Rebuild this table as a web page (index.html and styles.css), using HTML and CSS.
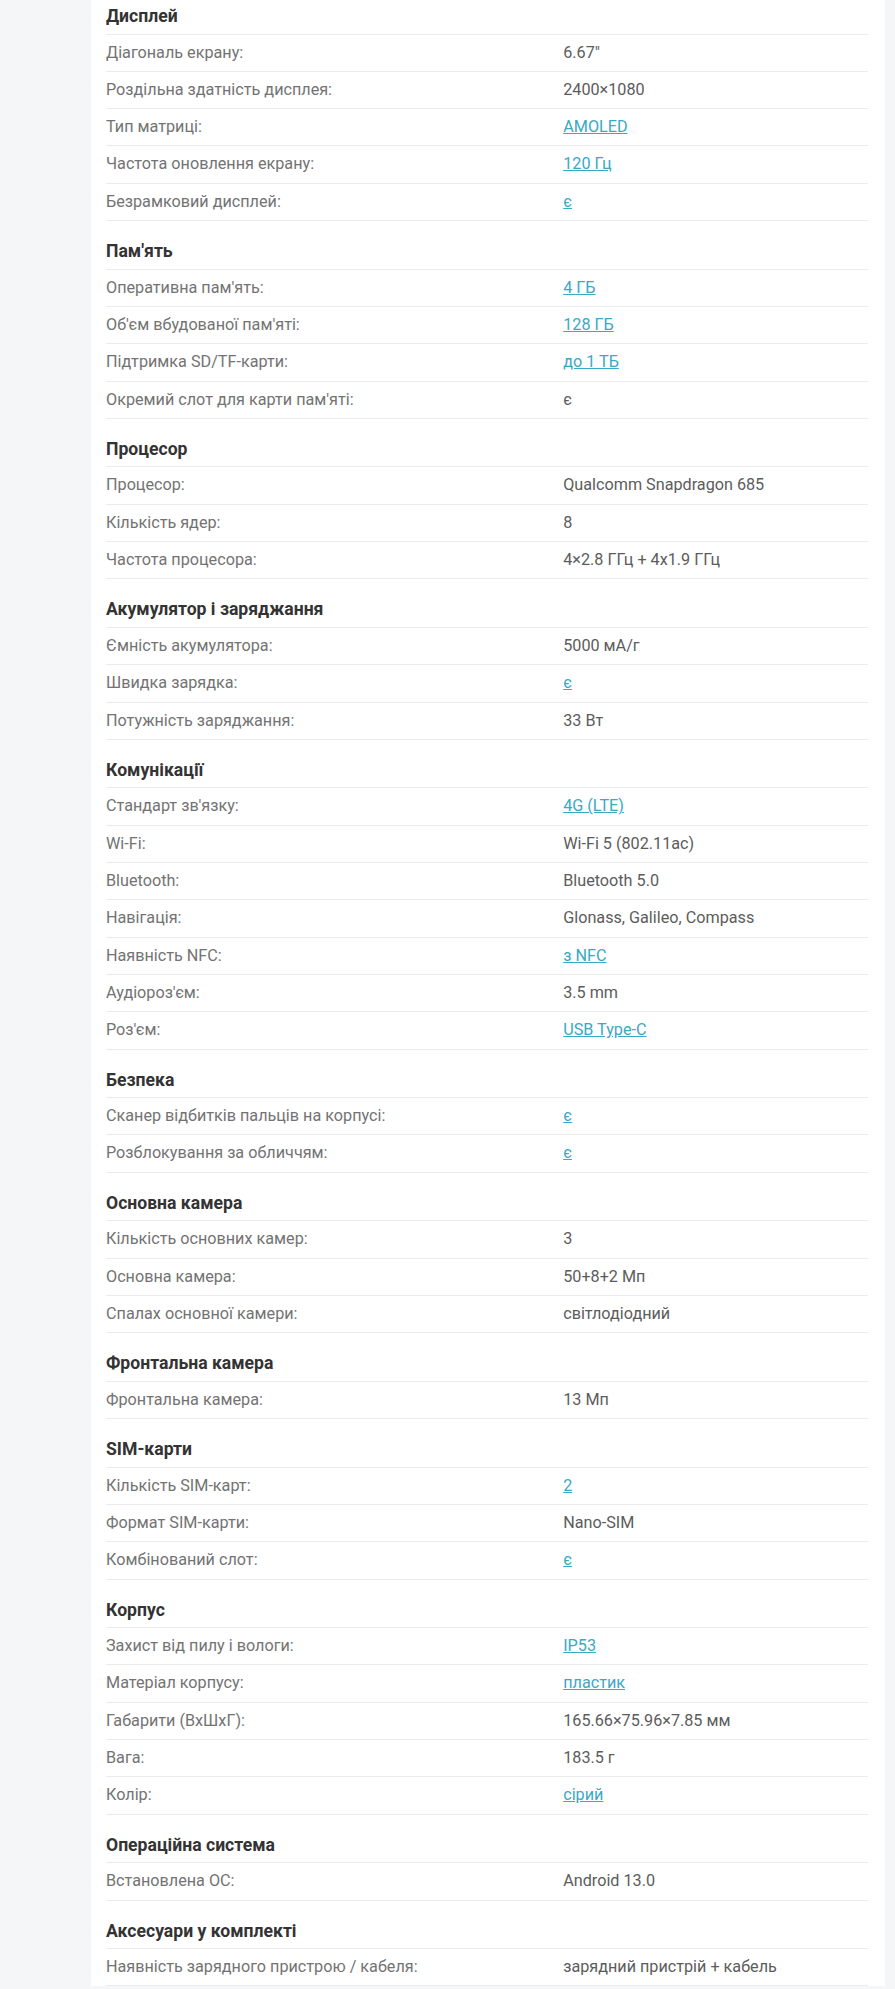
FILE: index.html
```html
<!DOCTYPE html>
<html lang="uk">
<head>
<meta charset="utf-8">
<title>Характеристики</title>
<link rel="stylesheet" href="styles.css">
</head>
<body>
<div class="page">
  <div class="card">
    <section class="group">
      <h3 class="group-title">Дисплей</h3>
      <div class="row"><div class="label">Діагональ екрану:</div><div class="value">6.67"</div></div>
      <div class="row"><div class="label">Роздільна здатність дисплея:</div><div class="value">2400×1080</div></div>
      <div class="row"><div class="label">Тип матриці:</div><div class="value"><a href="#">AMOLED</a></div></div>
      <div class="row"><div class="label">Частота оновлення екрану:</div><div class="value"><a href="#">120 Гц</a></div></div>
      <div class="row"><div class="label">Безрамковий дисплей:</div><div class="value"><a href="#">є</a></div></div>
    </section>
    <section class="group">
      <h3 class="group-title">Пам'ять</h3>
      <div class="row"><div class="label">Оперативна пам'ять:</div><div class="value"><a href="#">4 ГБ</a></div></div>
      <div class="row"><div class="label">Об'єм вбудованої пам'яті:</div><div class="value"><a href="#">128 ГБ</a></div></div>
      <div class="row"><div class="label">Підтримка SD/TF-карти:</div><div class="value"><a href="#">до 1 ТБ</a></div></div>
      <div class="row"><div class="label">Окремий слот для карти пам'яті:</div><div class="value">є</div></div>
    </section>
    <section class="group">
      <h3 class="group-title">Процесор</h3>
      <div class="row"><div class="label">Процесор:</div><div class="value">Qualcomm Snapdragon 685</div></div>
      <div class="row"><div class="label">Кількість ядер:</div><div class="value">8</div></div>
      <div class="row"><div class="label">Частота процесора:</div><div class="value">4×2.8 ГГц + 4x1.9 ГГц</div></div>
    </section>
    <section class="group">
      <h3 class="group-title">Акумулятор і заряджання</h3>
      <div class="row"><div class="label">Ємність акумулятора:</div><div class="value">5000 мА/г</div></div>
      <div class="row"><div class="label">Швидка зарядка:</div><div class="value"><a href="#">є</a></div></div>
      <div class="row"><div class="label">Потужність заряджання:</div><div class="value">33 Вт</div></div>
    </section>
    <section class="group">
      <h3 class="group-title">Комунікації</h3>
      <div class="row"><div class="label">Стандарт зв'язку:</div><div class="value"><a href="#">4G (LTE)</a></div></div>
      <div class="row"><div class="label">Wi-Fi:</div><div class="value">Wi-Fi 5 (802.11ac)</div></div>
      <div class="row"><div class="label">Bluetooth:</div><div class="value">Bluetooth 5.0</div></div>
      <div class="row"><div class="label">Навігація:</div><div class="value">Glonass, Galileo, Compass</div></div>
      <div class="row"><div class="label">Наявність NFC:</div><div class="value"><a href="#">з NFC</a></div></div>
      <div class="row"><div class="label">Аудіороз'єм:</div><div class="value">3.5 mm</div></div>
      <div class="row"><div class="label">Роз'єм:</div><div class="value"><a href="#">USB Type-C</a></div></div>
    </section>
    <section class="group">
      <h3 class="group-title">Безпека</h3>
      <div class="row"><div class="label">Сканер відбитків пальців на корпусі:</div><div class="value"><a href="#">є</a></div></div>
      <div class="row"><div class="label">Розблокування за обличчям:</div><div class="value"><a href="#">є</a></div></div>
    </section>
    <section class="group">
      <h3 class="group-title">Основна камера</h3>
      <div class="row"><div class="label">Кількість основних камер:</div><div class="value">3</div></div>
      <div class="row"><div class="label">Основна камера:</div><div class="value">50+8+2 Мп</div></div>
      <div class="row"><div class="label">Спалах основної камери:</div><div class="value">світлодіодний</div></div>
    </section>
    <section class="group">
      <h3 class="group-title">Фронтальна камера</h3>
      <div class="row"><div class="label">Фронтальна камера:</div><div class="value">13 Мп</div></div>
    </section>
    <section class="group">
      <h3 class="group-title">SIM-карти</h3>
      <div class="row"><div class="label">Кількість SIM-карт:</div><div class="value"><a href="#">2</a></div></div>
      <div class="row"><div class="label">Формат SIM-карти:</div><div class="value">Nano-SIM</div></div>
      <div class="row"><div class="label">Комбінований слот:</div><div class="value"><a href="#">є</a></div></div>
    </section>
    <section class="group">
      <h3 class="group-title">Корпус</h3>
      <div class="row"><div class="label">Захист від пилу і вологи:</div><div class="value"><a href="#">IP53</a></div></div>
      <div class="row"><div class="label">Матеріал корпусу:</div><div class="value"><a href="#">пластик</a></div></div>
      <div class="row"><div class="label">Габарити (ВхШхГ):</div><div class="value">165.66×75.96×7.85 мм</div></div>
      <div class="row"><div class="label">Вага:</div><div class="value">183.5 г</div></div>
      <div class="row"><div class="label">Колір:</div><div class="value"><a href="#">сірий</a></div></div>
    </section>
    <section class="group">
      <h3 class="group-title">Операційна система</h3>
      <div class="row"><div class="label">Встановлена ОС:</div><div class="value">Android 13.0</div></div>
    </section>
    <section class="group">
      <h3 class="group-title">Аксесуари у комплекті</h3>
      <div class="row"><div class="label">Наявність зарядного пристрою / кабеля:</div><div class="value">зарядний пристрій + кабель</div></div>
    </section>
  </div>
</div>
</body>
</html>
```

FILE: styles.css
```css
html, body {
  margin: 0;
  padding: 0;
  background: #f4f6f8;
}

body {
  font-family: Roboto, "Liberation Sans", sans-serif;
  -webkit-font-smoothing: antialiased;
}

.page {
  padding: 0 10px 0 91px;
}

.card {
  background: #ffffff;
  padding: 0 17px 0 15px;
  margin-top: -14px;
}

.group-title {
  margin: 0;
  padding: 19px 0 6.6px;
  font-size: 17.6px;
  line-height: 22px;
  font-weight: 700;
  color: #333333;
  border-bottom: 1px solid #ebebeb;
}

.row {
  display: grid;
  grid-template-columns: 60% 40%;
  padding: 8px 0;
  line-height: 20.3px;
  font-size: 16.2px;
  border-bottom: 1px solid #ebebeb;
}

.label {
  color: #737373;
}

.value {
  color: #5c5c5c;
}

.value a {
  color: #3aa8c6;
  text-decoration: underline;
}
```
